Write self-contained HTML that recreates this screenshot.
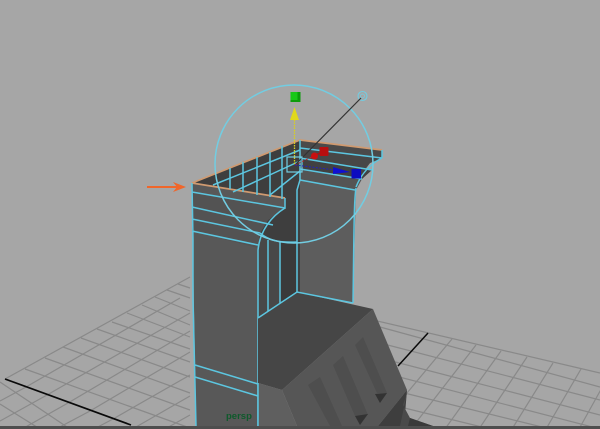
<!DOCTYPE html>
<html><head><meta charset="utf-8"><style>
html,body{margin:0;padding:0;background:#a5a5a5}
svg{display:block;filter:blur(.35px)}
</style></head><body>
<svg width="600" height="429" viewBox="0 0 600 429" xmlns="http://www.w3.org/2000/svg">
<rect width="600" height="429" fill="#a6a6a6"/>
<!-- left grid -->
<g stroke="#898989" stroke-width="1.2" fill="none">
<path d="M5 379L190 277M25 369L190 428M45 358L190 410M63 347L190 393M81 338L190 377M97 329L190 362M112 322L190 349M127 313L190 337M142 305L190 325M155 297L190 311M167 290L190 298M178 284L190 288"/>
<path d="M0 382L70 429M0 404L40 429"/>
<path d="M26 387L0 401M47 395L0 421M68 403L22 429M90 411L56 429M113 419L94 429"/>
<path d="M26 387L180 298M47 395L190 313M68 403L190 331M90 411L190 352M113 419L190 375M136 427L190 396M165 429L190 415"/>
</g>
<path d="M5 379L131 425" stroke="#0a0a0a" stroke-width="1.700" fill="none"/>
<!-- right grid -->
<g stroke="#898989" stroke-width="1.2" fill="none">
<path d="M373 320L600 373M380 327L600 387M380 343L600 400M380 358L600 415M380 372L600 429M380 387L550 429M380 402L490 429M400 423L424 429"/>
<path d="M452 339L377 429M476 345L411 429M501 351L445 429M527 357L479 429M553 363L512 429M581 369L546 429M609 375L579 429"/>
</g>
<path d="M428 333L398 366" stroke="#0a0a0a" stroke-width="1.500" fill="none"/>
<!-- column -->
<polygon points="192,183 285,198 285,208 268,220 260,233 258,250 258,429 196,429" fill="#585858"/>
<polygon points="192,192 285,208 268,220 260,233 258,248 192,231" fill="#535353"/>
<!-- inner back-left wall -->
<polygon points="192,183 300,140 300,292 258,318 258,248 260,233 268,220 285,208 285,198" fill="#3e3e3e"/>
<polygon points="258,248 260,233 278,242 297,242 297,292 258,318" fill="#484848"/>
<polygon points="280,242 297,242 297,292 280,303" fill="#3a3a3a"/>
<!-- right wall -->
<polygon points="300,140 382,150 382,158 370,163 360,177 356,187 353,303 297,292" fill="#5d5d5d"/>
<polygon points="300,148 382,158 370,163 364,170 302,158" fill="#474747"/>
<polygon points="300,158 372,170 362,179 300,169" fill="#414141"/>
<polygon points="300,169 362,179 356,190 300,180" fill="#545454"/>
<polygon points="297,180 300,180 300,292 297,292" fill="#3f3f3f"/>
<polygon points="300,140 382,150 382,158 300,148" fill="#4a4a4a"/>
<!-- orange edges -->
<path d="M192 183L300 140L382 150M192 183L285 198" stroke="#cf9a70" stroke-width="1.700" fill="none"/>
<!-- wireframe -->
<g stroke="#5cc6e0" stroke-width="1.500" fill="none">
<path d="M192 183L193 240L193 300L196 426M285 198L285 208L192 192M192 207L273 225M192 219L260 233M192 231L258 245"/>
<path d="M285 208C272 216 260 230 258 250L258 426"/>
<path d="M268 240L268 312M280 242L280 304M300 140L300 180L297 190L297 292"/>
<path d="M260 233C268 240 278 243 297 242"/>
<path d="M213 185L300 150M233 192L300 161M270 195L300 171"/>
<path d="M230 168L230 189M243 162L243 192M257 157L257 195M270 152L270 197M282 146L282 199"/>
<path d="M300 148L382 158M300 158L372 170M300 169L362 179M300 180L355 190"/>
<path d="M382 150L382 158"/>
<path d="M356 188C354 200 354 230 353 303M356 187C360 177 368 165 382 158"/>
</g>
<!-- lower block -->
<polygon points="258,318 297,292 373,309 282,390 258,383" fill="#464646"/>
<polygon points="373,309 407,390 378,426 297,426 282,390" fill="#565656"/>
<polygon points="258,383 282,390 297,426 258,426" fill="#5f5f5f"/>
<polygon points="407,390 378,426 404,426" fill="#3e3e3e"/>
<polygon points="407,393 403,405 410,418 433,426 400,426" fill="#4a4a4a"/>
<polygon points="410,418 433,426 408,426" fill="#3a3a3a"/>
<path d="M258 318L297 292L353 303M258 383L258 426" stroke="#5cc6e0" stroke-width="1.500" fill="none"/>
<path d="M195 365L258 384M195 377L258 396" stroke="#5cc6e0" stroke-width="1.500" fill="none"/>
<!-- spikes -->
<polygon points="355,345 363,337 387,393 377,393" fill="#4e4e4e"/>
<polygon points="333,365 343,356 368,415 355,416" fill="#4e4e4e"/>
<polygon points="308,385 320,377 342,426 330,426" fill="#4e4e4e"/>
<polygon points="375,394 387,393 380,403" fill="#333"/>
<polygon points="355,416 368,414 360,425" fill="#333"/>
<text x="226" y="419" font-family="'Liberation Sans',sans-serif" font-size="9.5" font-weight="bold" fill="#0f5a2c">persp</text>
<!-- bottom strip -->
<rect y="426" width="600" height="3" fill="#4e4e4e"/>
<!-- arrow -->
<path d="M147 187L178 187" stroke="#f0662a" stroke-width="2"/>
<polygon points="186,187 173,182 177,187 173,192" fill="#f0662a"/>
<!-- gizmo -->
<circle cx="294" cy="164" r="79" fill="none" stroke="#72cde2" stroke-width="1.500"/>
<circle cx="362.500" cy="96" r="4.500" fill="none" stroke="#72cde2" stroke-width="1.100"/>
<circle cx="362.500" cy="96" r="2" fill="none" stroke="#72cde2" stroke-width="0.800"/>
<path d="M295 165L361 98" stroke="#333" stroke-width="1.200" fill="none"/>
<path d="M294.500 120V165" stroke="#d8d020" stroke-width="1.300" stroke-dasharray="1.500 1" fill="none"/>
<polygon points="294.500,107 290,120 299,120" fill="#e0d81c"/>
<rect x="290.500" y="92" width="10" height="10" fill="#0c9c0c"/>
<rect x="290.500" y="92" width="7" height="8" fill="#18c818"/>
<rect x="287" y="157" width="15" height="15" fill="none" stroke="#72cde2" stroke-width="1.200"/>
<path d="M295 165L314 156" stroke="#c82020" stroke-width="1" stroke-dasharray="2 2" fill="none"/>
<path d="M314 156L324 151" stroke="#b01010" stroke-width="1.500"/>
<circle cx="314.500" cy="156" r="3.500" fill="#c81010"/>
<rect x="319.500" y="147" width="9" height="9" rx="1" fill="#b80e0e"/>
<path d="M295 165L335 170" stroke="#2222c0" stroke-width="1" stroke-dasharray="2 1.500" fill="none"/>
<polygon points="333,167 333,174 350,172" fill="#1010d0"/>
<rect x="351.500" y="169" width="9.500" height="9.500" fill="#0c0cc0"/>
</svg>
</body></html>
